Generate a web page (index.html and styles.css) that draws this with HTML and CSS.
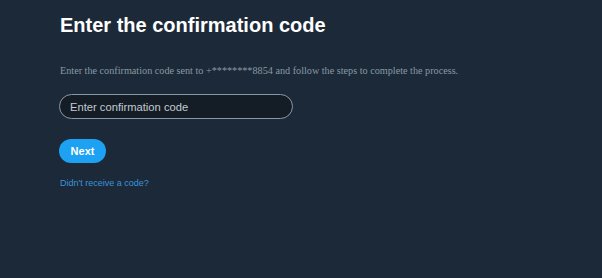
FILE: index.html
```html
<!DOCTYPE html>
<html>
<head>
<meta charset="utf-8">
<link rel="stylesheet" href="styles.css">
</head>
<body>
<main class="page">
  <h1 class="title">Enter the confirmation code</h1>
  <p class="desc">Enter the confirmation code sent to +********8854 and follow the steps to complete the process.</p>
  <div class="field"><input class="input" type="text" placeholder="Enter confirmation code"></div>
  <button class="btn">Next</button>
  <a class="link" href="#">Didn't receive a code?</a>
</main>
</body>
</html>
```
FILE: styles.css
```css
html, body {
  margin: 0;
  padding: 0;
  background: #1c2938;
  height: 100%;
}
.page {
  display: flex;
  flex-direction: column;
  align-items: flex-start;
  padding: 13px 0 0 59px;
}
.title {
  margin: 0 0 0 1px;
  font-family: "Liberation Sans", Arial, sans-serif;
  font-weight: bold;
  font-size: 20px;
  line-height: 24px;
  color: #ffffff;
}
.desc {
  margin: 27px 0 0 1px;
  font-family: "Liberation Serif", "Times New Roman", serif;
  font-size: 10.2px;
  line-height: 14px;
  color: #8899a6;
}
.field {
  margin-top: 16px;
}
.input {
  box-sizing: border-box;
  width: 234px;
  height: 25px;
  border: 1px solid #8899a6;
  border-radius: 13px;
  background: #141d26;
  padding: 0 10px;
  font-family: "Liberation Sans", Arial, sans-serif;
  font-size: 11.2px;
  color: #ffffff;
  outline: none;
}
.input::placeholder {
  color: #c3cad1;
}
.btn {
  margin-top: 20px;
  box-sizing: border-box;
  width: 47px;
  height: 24px;
  border: none;
  border-radius: 12px;
  background: #1da1f2;
  color: #ffffff;
  font-family: "Liberation Sans", Arial, sans-serif;
  font-weight: bold;
  font-size: 11px;
  padding: 0;
}
.link {
  margin: 14px 0 0 1px;
  font-family: "Liberation Sans", Arial, sans-serif;
  font-size: 9px;
  line-height: 12px;
  color: #3b94d9;
  text-decoration: none;
}
```
